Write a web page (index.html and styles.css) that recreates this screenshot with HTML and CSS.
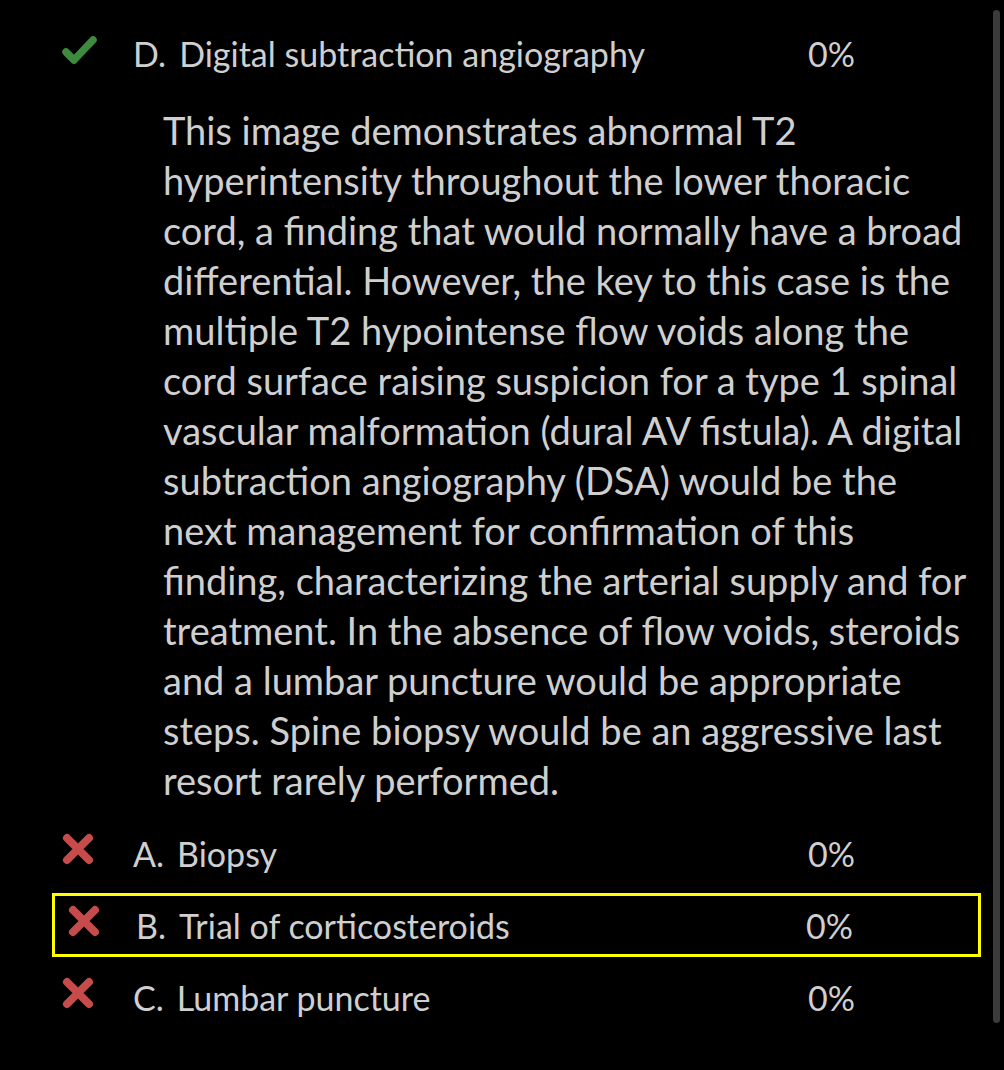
FILE: index.html
```html
<!DOCTYPE html>
<html>
<head>
<meta charset="utf-8">
<link rel="stylesheet" href="styles.css">
</head>
<body>
<div class="panel">
  <div class="row">
    <span class="icon"><svg class="check" width="37" height="32" viewBox="0 0 37 32"><path d="M5 18 L13 26 L32 6" fill="none" stroke="#3d8b3d" stroke-width="7.5" stroke-linecap="round" stroke-linejoin="round"/></svg></span>
    <span class="label"><span class="letter">D.</span>Digital subtraction angiography</span>
    <span class="pct">0%</span>
  </div>
  <p class="explain">This image demonstrates abnormal T2<br>hyperintensity throughout the lower thoracic<br>cord, a finding that would normally have a broad<br>differential. However, the key to this case is the<br>multiple T2 hypointense flow voids along the<br>cord surface raising suspicion for a type 1 spinal<br>vascular malformation (dural AV fistula). A digital<br>subtraction angiography (DSA) would be the<br>next management for confirmation of this<br>finding, characterizing the arterial supply and for<br>treatment. In the absence of flow voids, steroids<br>and a lumbar puncture would be appropriate<br>steps. Spine biopsy would be an aggressive last<br>resort rarely performed.</p>
  <div class="row">
    <span class="icon"><svg class="x" width="32" height="32" viewBox="0 0 32 32"><path d="M5 5 L27 27 M27 5 L5 27" stroke="#c64b4b" stroke-width="8" stroke-linecap="round"/></svg></span>
    <span class="label"><span class="letter">A.</span>Biopsy</span>
    <span class="pct">0%</span>
  </div>
  <div class="row selected">
    <span class="icon"><svg class="x" width="32" height="32" viewBox="0 0 32 32"><path d="M5 5 L27 27 M27 5 L5 27" stroke="#c64b4b" stroke-width="8" stroke-linecap="round"/></svg></span>
    <span class="label"><span class="letter">B.</span>Trial of corticosteroids</span>
    <span class="pct">0%</span>
  </div>
  <div class="row">
    <span class="icon"><svg class="x" width="32" height="32" viewBox="0 0 32 32"><path d="M5 5 L27 27 M27 5 L5 27" stroke="#c64b4b" stroke-width="8" stroke-linecap="round"/></svg></span>
    <span class="label"><span class="letter">C.</span>Lumbar puncture</span>
    <span class="pct">0%</span>
  </div>
</div>
<div class="scrollbar"></div>
</body>
</html>
```
FILE: styles.css
```css
html, body {
  margin: 0;
  padding: 0;
  background: #000;
}
body {
  font-family: Lato, "Open Sans", sans-serif;
  color: #cfcfcf;
  width: 1004px;
  height: 1070px;
  overflow: hidden;
}
.panel {
  padding-top: 17px;
}
.row {
  display: flex;
  align-items: center;
  height: 72px;
  margin: 0 23px 0 52px;
  padding-left: 10px;
  box-sizing: border-box;
  font-size: 34px;
}
.row.selected {
  height: 64px;
  margin-top: 4px;
  margin-bottom: 4px;
  border: 3px solid #ffff00;
  padding-left: 13px;
}
.icon {
  width: 71px;
  display: flex;
  align-items: center;
}
.icon .check { margin-bottom: 7px; margin-left: -1px; }
.icon .x { margin-bottom: 8px; }
.selected .icon { width: 68px; }
.label {
  width: 675px;
}
.letter {
  margin-right: 13px;
}
.selected .label { width: 670px; }
.explain {
  margin: 16px 0 12px 163px;
  font-size: 38px;
  line-height: 50px;
  white-space: nowrap;
}
.scrollbar {
  position: fixed;
  right: 4px;
  top: 10px;
  width: 7px;
  height: 1013px;
  border-radius: 4px;
  background: #3b3b3b;
}
```
